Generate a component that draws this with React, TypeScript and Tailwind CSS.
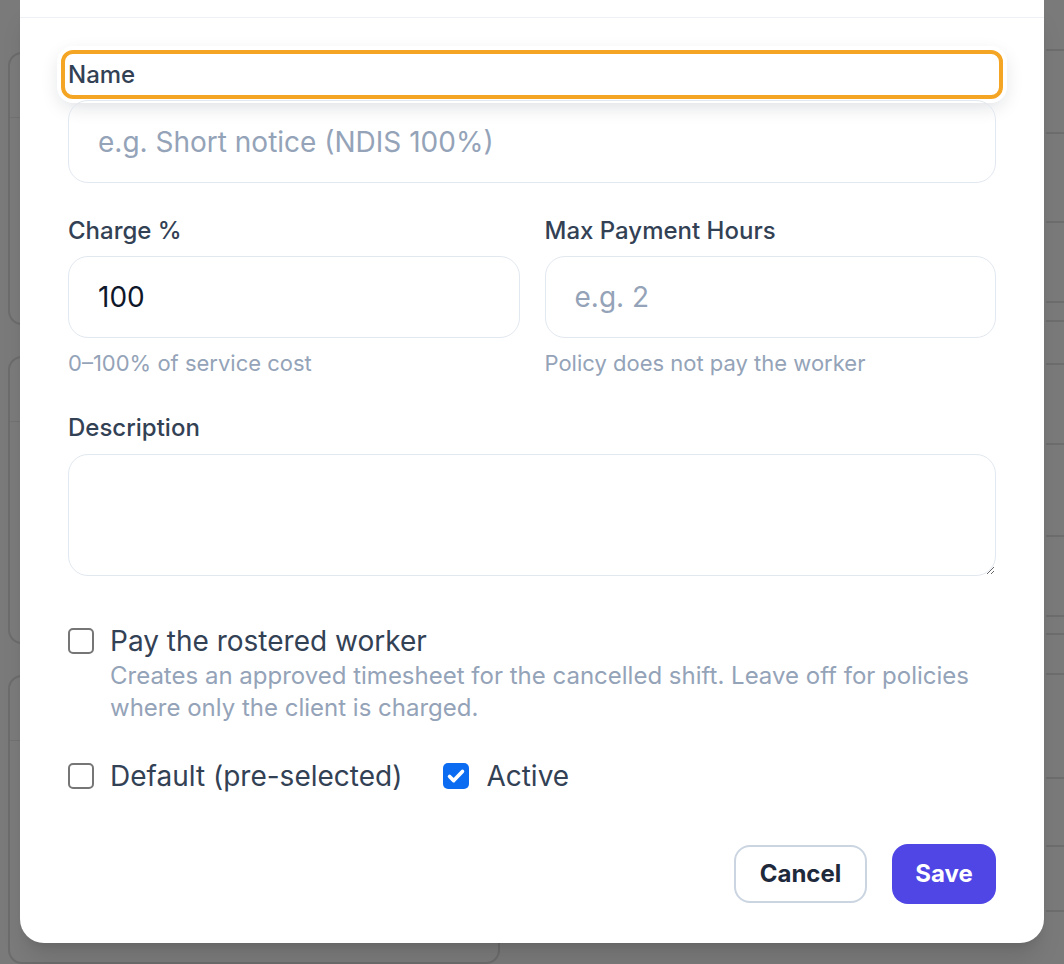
import { useState } from "react";

function Check({ checked, onChange }: { checked: boolean; onChange: () => void }) {
  return (
    <button
      type="button"
      onClick={onChange}
      className={
        checked
          ? "w-[26px] h-[26px] shrink-0 rounded-[5px] bg-[#0b6cf2] flex items-center justify-center"
          : "w-[26px] h-[26px] shrink-0 rounded-[5px] border-2 border-[#767676] bg-white"
      }
    >
      {checked && (
        <svg viewBox="0 0 24 24" className="w-[22px] h-[22px]" fill="none" stroke="white" strokeWidth="4" strokeLinecap="round" strokeLinejoin="round">
          <path d="M5 12.5l4.5 4.5L19 7" />
        </svg>
      )}
    </button>
  );
}

function Backdrop() {
  const rows = [49, 132, 221, 301, 320, 363, 443, 535, 615, 633, 673, 777, 845, 910];
  return (
    <div className="h-full flex">
      <div className="w-[500px] pl-[8px] pt-[52px] flex flex-col gap-[31px]">
        {[283, 298, 300].map((h, i) => (
          <div key={i} className="rounded-[14px] border-2 border-[#6c6c6c] bg-[#7b7b7b]" style={{ height: h }}>
            <div className="h-[64px] border-b border-[#727272]" />
          </div>
        ))}
      </div>
      <div className="flex-1 flex flex-col">
        {rows.map((y, i) => (
          <div
            key={i}
            className="absolute left-[1046px] right-0 h-[2px] bg-[#6d6d6d]"
            style={{ top: y }}
          />
        ))}
      </div>
    </div>
  );
}

export default function App() {
  const [payWorker, setPayWorker] = useState(false);
  const [isDefault, setIsDefault] = useState(false);
  const [active, setActive] = useState(true);

  return (
    <div
      className="relative h-[964px] w-full overflow-hidden bg-[#7a7a7a]"
      style={{ fontFamily: "Inter, 'Noto Sans', sans-serif" }}
    >
      <Backdrop />

      <div className="absolute inset-0 flex items-start justify-center px-[20px]">
        <div className="w-[1024px] bg-white rounded-b-[24px] shadow-xl">
          <div className="h-[18px] border-b-[1.5px] border-[#edf0f4]" />

          <div className="px-[48px] pt-[32px] pb-[39px]">
            {/* Name */}
            <label className="-mx-[7px] h-[49px] pl-[3px] flex items-center rounded-[12px] border-4 border-[#f5a524] bg-white text-[24px] font-medium text-[#334155] shadow-[0_0_0_4px_#ffffff,0_6px_20px_rgba(15,23,42,0.16)]">
              Name
            </label>
            <input
              className="mt-[1px] w-full h-[83px] rounded-[20px] border-[1.5px] border-[#e2e8f0] px-[29px] text-[28px] text-[#0f172a] placeholder:text-[#94a3b8] outline-none"
              placeholder="e.g. Short notice (NDIS 100%)"
            />

            {/* Charge / Max hours */}
            <div className="mt-[32px] grid grid-cols-2 gap-x-[25px]">
              <div>
                <div className="text-[24px] leading-[32px] font-medium text-[#334155]">Charge %</div>
                <input
                  className="mt-[9px] w-full h-[82px] rounded-[20px] border-[1.5px] border-[#e2e8f0] px-[29px] text-[28px] text-[#0f172a] outline-none"
                  defaultValue="100"
                />
                <div className="mt-[10px] text-[22px] leading-[30px] text-[#94a3b8]">0–100% of service cost</div>
              </div>
              <div>
                <div className="text-[24px] leading-[32px] font-medium text-[#334155]">Max Payment Hours</div>
                <input
                  className="mt-[9px] w-full h-[82px] rounded-[20px] border-[1.5px] border-[#e2e8f0] px-[29px] text-[28px] text-[#0f172a] placeholder:text-[#94a3b8] outline-none"
                  placeholder="e.g. 2"
                />
                <div className="mt-[10px] text-[22px] leading-[30px] text-[#94a3b8]">Policy does not pay the worker</div>
              </div>
            </div>

            {/* Description */}
            <div className="mt-[34px] text-[24px] leading-[32px] font-medium text-[#334155]">Description</div>
            <textarea
              className="mt-[10px] block w-full h-[122px] rounded-[20px] border-[1.5px] border-[#e2e8f0] px-[29px] py-[16px] text-[28px] text-[#0f172a] outline-none resize-y"
            />

            {/* Pay worker */}
            <div className="mt-[46px] flex items-start gap-[16px]">
              <div className="h-[38px] flex items-center">
                <Check checked={payWorker} onChange={() => setPayWorker(!payWorker)} />
              </div>
              <div>
                <div className="text-[28px] leading-[38px] text-[#334155]">Pay the rostered worker</div>
                <div className="text-[24px] leading-[32px] text-[#94a3b8]">
                  Creates an approved timesheet for the cancelled shift. Leave off for policies
                  <br />
                  where only the client is charged.
                </div>
              </div>
            </div>

            {/* Default / Active */}
            <div className="mt-[33px] flex items-center h-[38px]">
              <Check checked={isDefault} onChange={() => setIsDefault(!isDefault)} />
              <span className="ml-[16px] text-[28px] leading-[38px] text-[#334155]">Default (pre-selected)</span>
              <span className="ml-[41px] flex">
                <Check checked={active} onChange={() => setActive(!active)} />
              </span>
              <span className="ml-[17px] text-[28px] leading-[38px] text-[#334155]">Active</span>
            </div>

            {/* Actions */}
            <div className="mt-[49px] flex items-center justify-end gap-[25px] h-[60px]">
              <button className="w-[133px] h-[58px] rounded-[16px] border-2 border-[#cbd5e1] bg-white text-[24px] font-bold text-[#1e293b]">
                Cancel
              </button>
              <button className="w-[104px] h-[60px] rounded-[16px] bg-[#4f46e5] text-[24px] font-bold text-white">
                Save
              </button>
            </div>
          </div>
        </div>
      </div>
    </div>
  );
}
